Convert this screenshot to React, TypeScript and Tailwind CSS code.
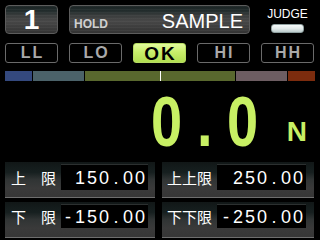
import React from "react";

const boxBg =
  "bg-[image:repeating-linear-gradient(to_bottom,rgba(255,255,255,0.035)_0px,rgba(255,255,255,0.035)_1px,transparent_1px,transparent_3px),linear-gradient(to_bottom,#1b2424_0%,#222c2c_18%,#3a3d3d_35%,#474747_55%,#3c3c3c_80%,#333333_100%)]";

const panelBg =
  "bg-[linear-gradient(to_bottom,#111717_0%,#172020_30%,#303434_50%,#3a3a3a_75%,#363636_100%)]";

function Cells({ text }: { text: string }) {
  return (
    <div className="flex">
      {text.split("").map((c, i) => (
        <span key={i} className="w-[12px] text-center">
          {c}
        </span>
      ))}
    </div>
  );
}

function Judge({ t, on }: { t: string; on?: boolean }) {
  return (
    <div
      className={
        on
          ? "w-[53px] h-[20px] rounded-[3px] border border-[#b6dc62] bg-[linear-gradient(to_bottom,#e2fa9c_0%,#c8ee6a_45%,#b2de52_100%)] flex items-center justify-center text-black font-bold text-[19px] leading-none tracking-[2px] pl-[2px]"
          : "w-[53px] h-[20px] rounded-[3px] border border-[#6a6a6a] bg-black flex items-center justify-center text-[#a9a9a9] font-bold text-[16px] leading-none tracking-[2px] pl-[2px]"
      }
    >
      {t}
    </div>
  );
}

function Panel({
  label,
  value,
  wide,
  boxH,
  panelH,
}: {
  label: string;
  value: string;
  wide?: boolean;
  boxH: string;
  panelH: string;
}) {
  return (
    <div
      className={`${panelH} ${panelBg} border-b border-[#6e6e6e] pt-[2px] ${
        wide ? "pl-[5px] pr-[8px]" : "pl-[6px] pr-[7px]"
      }`}
    >
      <div className="flex items-center justify-between">
        <span className="text-white text-[15px] leading-none font-['Noto_Sans_CJK_JP',sans-serif]">
          {label}
        </span>
        <div
          className={`${boxH} ${
            wide ? "w-[89px]" : "w-[87px]"
          } bg-black border-t border-[#2c3030] flex items-center justify-end pr-[2px] text-white text-[18px] leading-none font-['Liberation_Sans',sans-serif]`}
        >
          <Cells text={value} />
        </div>
      </div>
    </div>
  );
}

export default function App() {
  return (
    <div className="w-[320px] h-[240px] bg-black overflow-hidden font-['Liberation_Sans',sans-serif]">
      {/* top row */}
      <div className="flex px-[5px] pt-[5px] gap-[11px]">
        <div
          className={`w-[53px] h-[29px] rounded-[4px] border border-[#5c5c5c] ${boxBg} flex items-center justify-center`}
        >
          <span className="text-white font-bold text-[28px] leading-none">1</span>
        </div>
        <div
          className={`w-[181px] h-[29px] rounded-[4px] border border-[#5c5c5c] ${boxBg} flex items-end pb-[2px] pl-[4px] pr-[6px]`}
        >
          <div className="flex items-baseline justify-between w-full">
            <span className="text-[#cfcfcf] font-bold text-[12px] leading-none">HOLD</span>
            <span className="text-white text-[20px] leading-none">SAMPLE</span>
          </div>
        </div>
        <div className="w-[53px] flex flex-col items-center pt-[3px]">
          <span className="text-white text-[12px] leading-none">JUDGE</span>
          <div className="mt-[4px] w-[33px] h-[9px] rounded-[3px] border border-[#8fa0a0] bg-[linear-gradient(to_bottom,#f6fafa_0%,#e2eaea_50%,#bccccc_100%)]" />
        </div>
      </div>

      {/* judge row */}
      <div className="flex px-[5px] mt-[9px] gap-[11px]">
        <Judge t="LL" />
        <Judge t="LO" />
        <Judge t="OK" on />
        <Judge t="HI" />
        <Judge t="HH" />
      </div>

      {/* bar */}
      <div className="flex px-[5px] mt-[8px] h-[10px] gap-[1px]">
        <div className="w-[27px] bg-[#34497e]" />
        <div className="w-[51px] bg-[#4b6269]" />
        <div className="w-[150px] bg-[#59682e] flex">
          <div className="w-[75px]" />
          <div className="w-[1px] bg-white" />
        </div>
        <div className="w-[51px] bg-[#6d5d62]" />
        <div className="w-[27px] bg-[#7c2c0e]" />
      </div>

      {/* big value */}
      <div className="flex justify-end items-end mt-[6px] pr-[13px] text-[#c8f064] font-bold">
        <div className="flex text-[70px] leading-[70px]">
          <span className="w-[38px] flex justify-center">
            <span className="scale-x-[0.8]">0</span>
          </span>
          <span className="w-[38px] flex justify-center">
            <span className="scale-x-[0.8]">.</span>
          </span>
          <span className="w-[38px] flex justify-center">
            <span className="scale-x-[0.8]">0</span>
          </span>
        </div>
        <span className="ml-[25px] mb-[11px] text-[28px] leading-none">N</span>
      </div>

      {/* panels */}
      <div className="grid grid-cols-[150px_152px] gap-x-[7px] gap-y-[4px] px-[5px] mt-[5px]">
        <Panel label="上　限" value="150.00" boxH="h-[26px]" panelH="h-[36px]" />
        <Panel label="上上限" value="250.00" wide boxH="h-[26px]" panelH="h-[36px]" />
        <Panel label="下　限" value="-150.00" boxH="h-[24px]" panelH="h-[36px]" />
        <Panel label="下下限" value="-250.00" wide boxH="h-[24px]" panelH="h-[36px]" />
      </div>
    </div>
  );
}
